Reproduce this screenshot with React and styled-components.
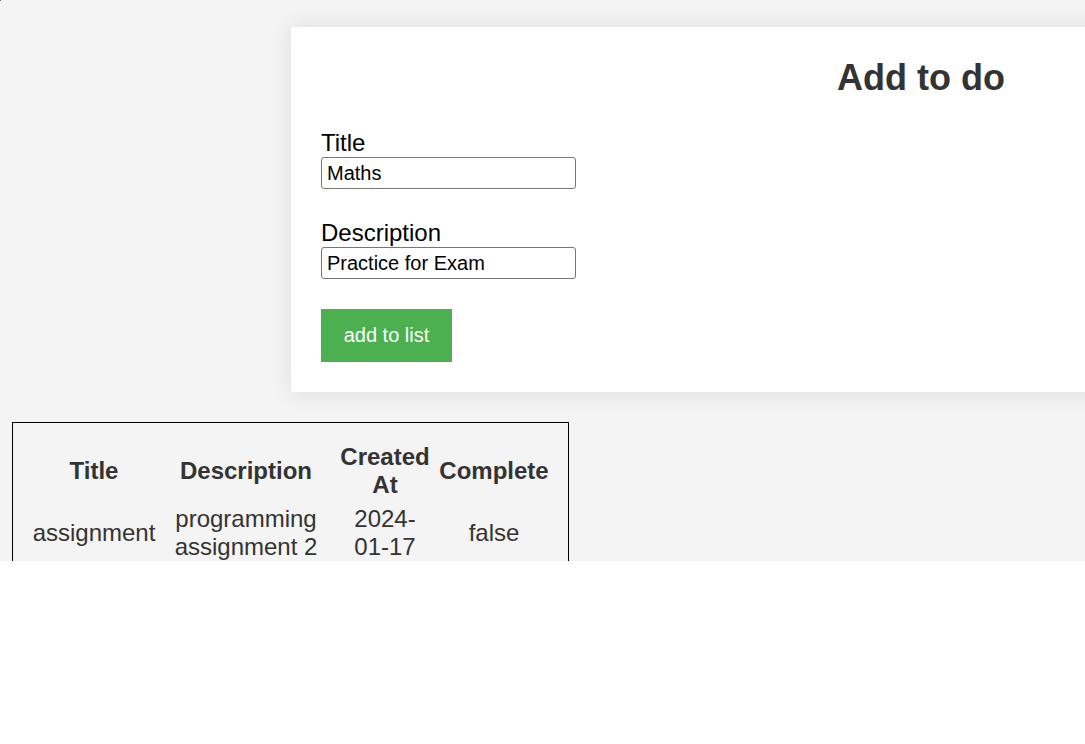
import React, { useState } from "react";
import styled, { createGlobalStyle } from "styled-components";

const GlobalStyle = createGlobalStyle`
  * { box-sizing: border-box; }
  body {
    margin: 0;
    background: #fff;
    font-family: "Liberation Sans", Arial, sans-serif;
    font-size: 24px;
    line-height: 28px;
  }
`;

const Page = styled.main`
  position: relative;
  height: 561px;
  padding: 27px 0 0 12px;
  overflow: hidden;
  background: #f4f4f4;
  color: #333;

  &::before {
    content: "";
    position: absolute;
    top: 0;
    left: 0;
    width: 1px;
    height: 1px;
    background: #777;
  }
`;

const Card = styled.section`
  width: 1260px;
  margin: 0 0 30px 279px;
  padding: 30px;
  background: #fff;
  box-shadow: 0 0 22px rgba(0, 0, 0, 0.1);
`;

const Heading = styled.h1`
  margin: 0 0 30px;
  font-size: 36px;
  line-height: 42px;
  text-align: center;
`;

const Form = styled.form`
  display: flex;
  flex-direction: column;
  align-items: flex-start;
  gap: 30px;
  color: #000;
`;

const Field = styled.div`
  display: flex;
  flex-direction: column;
`;

const TextInput = styled.input`
  width: 255px;
  height: 32px;
  padding: 0 5px;
  border: 1px solid #767676;
  border-radius: 3px;
  background: #fff;
  color: #000;
  font: 20px "Liberation Sans", Arial, sans-serif;
`;

const SubmitButton = styled.button`
  min-width: 131px;
  padding: 15px 22px;
  border: 0;
  background: #4caf50;
  color: #fff;
  font: 20px/23px "Liberation Sans", Arial, sans-serif;
  cursor: pointer;
`;

const ListBox = styled.section`
  width: fit-content;
  padding: 17px 18px 15px 15px;
  border: 1px solid #000;
`;

const TodoTable = styled.table`
  table-layout: fixed;
  width: 522px;
  border-collapse: collapse;
  text-align: center;

  th, td {
    padding: 3px 1px;
    vertical-align: middle;
  }
`;

const Column = styled.col`
  width: ${(p) => p.$width}px;
`;

const columns = [
  { name: "Title", width: 132 },
  { name: "Description", width: 172 },
  { name: "Created At", width: 106 },
  { name: "Complete", width: 112 },
];

function LabelledInput({ id, label, initial }) {
  const [value, setValue] = useState(initial);
  return (
    <Field>
      <label htmlFor={id}>{label}</label>
      <TextInput id={id} type="text" value={value} onChange={(e) => setValue(e.target.value)} />
    </Field>
  );
}

export default function App() {
  return (
    <>
      <GlobalStyle />
      <Page>
        <Card>
          <Heading>Add to do</Heading>
          <Form onSubmit={(e) => e.preventDefault()}>
            <LabelledInput id="title" label="Title" initial="Maths" />
            <LabelledInput id="description" label="Description" initial="Practice for Exam" />
            <SubmitButton type="submit">add to list</SubmitButton>
          </Form>
        </Card>
        <ListBox>
          <TodoTable>
            <colgroup>
              {columns.map((c) => <Column key={c.name} $width={c.width} />)}
            </colgroup>
            <thead>
              <tr>
                {columns.map((c) => <th key={c.name} scope="col">{c.name}</th>)}
              </tr>
            </thead>
            <tbody>
              <tr>
                <td>assignment</td>
                <td>programming assignment 2</td>
                <td>2024-<br />01-17</td>
                <td>false</td>
              </tr>
            </tbody>
          </TodoTable>
        </ListBox>
      </Page>
    </>
  );
}
